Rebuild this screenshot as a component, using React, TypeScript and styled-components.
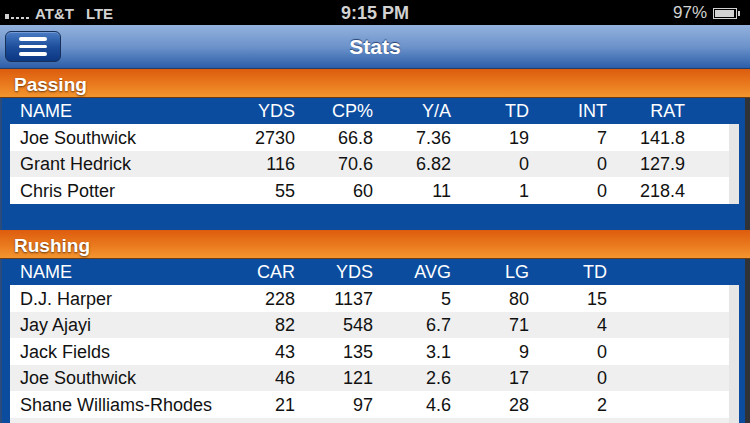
import React from "react";
import styled, { createGlobalStyle } from "styled-components";

const GlobalStyle = createGlobalStyle`
  html, body {
    margin: 0;
    padding: 0;
    background: #2f3237;
    font-family: "Liberation Sans", Arial, Helvetica, sans-serif;
  }
  * { box-sizing: border-box; }
`;

type Row = { name: string; values: (string | number)[] };

const passingCols = ["YDS", "CP%", "Y/A", "TD", "INT", "RAT"];
const passingRows: Row[] = [
  { name: "Joe Southwick", values: [2730, "66.8", "7.36", 19, 7, "141.8"] },
  { name: "Grant Hedrick", values: [116, "70.6", "6.82", 0, 0, "127.9"] },
  { name: "Chris Potter", values: [55, 60, 11, 1, 0, "218.4"] },
];

const rushingCols = ["CAR", "YDS", "AVG", "LG", "TD"];
const rushingRows: Row[] = [
  { name: "D.J. Harper", values: [228, 1137, 5, 80, 15] },
  { name: "Jay Ajayi", values: [82, 548, "6.7", 71, 4] },
  { name: "Jack Fields", values: [43, 135, "3.1", 9, 0] },
  { name: "Joe Southwick", values: [46, 121, "2.6", 17, 0] },
  { name: "Shane Williams-Rhodes", values: [21, 97, "4.6", 28, 2] },
  { name: "", values: ["", "", "", "", ""] },
];

const Screen = styled.div`
  width: 750px;
  height: 423px;
  overflow: hidden;
  display: flex;
  flex-direction: column;
`;

const StatusBar = styled.div`
  height: 25px;
  flex: 0 0 25px;
  background: #000;
  color: #d2d2d2;
  display: grid;
  grid-template-columns: 1fr auto 1fr;
  align-items: center;
  padding: 1px 5px 0;
  font-weight: bold;
`;

const Carrier = styled.div`
  display: flex;
  align-items: center;
  gap: 6px;
  font-size: 15px;
`;

const Signal = styled.div`
  display: flex;
  align-items: flex-end;
  gap: 2px;
  height: 12px;
  padding-top: 3px;
`;

const SignalDot = styled.span<{ $on?: boolean }>`
  width: ${(p) => (p.$on ? 4 : 3)}px;
  height: ${(p) => (p.$on ? 5 : 2)}px;
  background: #d2d2d2;
`;

const Clock = styled.div`
  font-size: 18px;
`;

const Battery = styled.div`
  display: flex;
  align-items: center;
  justify-content: flex-end;
  gap: 6px;
  font-size: 17px;
  font-weight: normal;
`;

const BatteryBody = styled.div`
  width: 24px;
  height: 11px;
  border: 1px solid #d2d2d2;
  padding: 1px;
  position: relative;
  &::before {
    content: "";
    display: block;
    width: 97%;
    height: 100%;
    background: #d2d2d2;
  }
  &::after {
    content: "";
    position: absolute;
    right: -4px;
    top: 2px;
    width: 2px;
    height: 5px;
    background: #d2d2d2;
  }
`;

const NavBar = styled.div`
  height: 44px;
  flex: 0 0 44px;
  border-bottom: 1px solid #233f68;
  background: linear-gradient(#93b2dd, #6d93cb 50%, #2c5ea8);
  display: grid;
  grid-template-columns: 70px 1fr 70px;
  align-items: center;
`;

const MenuButton = styled.button`
  margin-left: 5px;
  width: 56px;
  height: 31px;
  border-radius: 6px;
  border: 1px solid #16305a;
  background: linear-gradient(#4a7bc4, #1e4f9c 50%, #0b3682);
  box-shadow: inset 0 1px 0 rgba(255, 255, 255, 0.25);
  display: flex;
  flex-direction: column;
  align-items: center;
  justify-content: center;
  gap: 4px;
  padding: 0;
`;

const MenuLine = styled.span`
  width: 28px;
  height: 3.5px;
  border-radius: 2px;
  background: #fff;
`;

const Title = styled.div`
  text-align: center;
  color: #fff;
  font-size: 21px;
  font-weight: bold;
  padding-top: 1px;
  text-shadow: 0 -1px 1px rgba(20, 45, 90, 0.8);
`;

const SectionHeader = styled.div`
  height: 29px;
  flex: 0 0 29px;
  border-bottom: 1px solid #6b3a12;
  background: linear-gradient(#dc5c0e, #ea7a1e 55%, #f3962f);
  color: #fff;
  font-size: 19px;
  font-weight: bold;
  line-height: 31px;
  padding-left: 14px;
  text-shadow: 0 1px 2px rgba(60, 25, 0, 0.75);
`;

const Panel = styled.div<{ $bottom: number }>`
  background: #0b4c9f;
  margin-right: 5px;
  border-left: 2px solid #2a4c7c;
  padding: 0 6px ${(p) => p.$bottom}px 8px;
`;

const Grid = styled.div<{ $cols: number }>`
  display: grid;
  grid-template-columns: 197px repeat(${(p) => p.$cols}, 78px) 1fr;
  align-items: center;
  padding-left: 10px;
  font-size: 18px;
`;

const HeaderRow = styled(Grid)`
  height: 26px;
  color: #fff;
`;

const Table = styled.div`
  background: #fff;
  border-right: 10px solid #e6e6e6;
`;

const DataRow = styled(Grid)<{ $alt: boolean }>`
  height: 26.5px;
  padding-top: 2px;
  background: ${(p) => (p.$alt ? "#efefef" : "#fff")};
  color: #111;
`;

const Cell = styled.span<{ $num?: boolean }>`
  text-align: ${(p) => (p.$num ? "right" : "left")};
  white-space: nowrap;
`;

const StatSection = ({
  title,
  cols,
  rows,
  bottom,
}: {
  title: string;
  cols: string[];
  rows: Row[];
  bottom: number;
}) => (
  <>
    <SectionHeader>{title}</SectionHeader>
    <Panel $bottom={bottom}>
      <HeaderRow $cols={cols.length}>
        <Cell>NAME</Cell>
        {cols.map((c, i) => (
          <Cell key={i} $num>
            {c}
          </Cell>
        ))}
      </HeaderRow>
      <Table>
        {rows.map((r, i) => (
          <DataRow key={i} $cols={cols.length} $alt={i % 2 === 1}>
            <Cell>{r.name}</Cell>
            {r.values.map((v, j) => (
              <Cell key={j} $num>
                {v}
              </Cell>
            ))}
          </DataRow>
        ))}
      </Table>
    </Panel>
  </>
);

export default function App() {
  return (
    <>
      <GlobalStyle />
      <Screen>
        <StatusBar>
          <Carrier>
            <Signal>
              <SignalDot $on />
              <SignalDot />
              <SignalDot />
              <SignalDot />
              <SignalDot />
            </Signal>
            <span>AT&amp;T</span>
            <span style={{ marginLeft: 6 }}>LTE</span>
          </Carrier>
          <Clock>9:15 PM</Clock>
          <Battery>
            <span>97%</span>
            <BatteryBody />
            <span style={{ width: 2 }} />
          </Battery>
        </StatusBar>
        <NavBar>
          <MenuButton aria-label="Menu">
            <MenuLine />
            <MenuLine />
            <MenuLine />
          </MenuButton>
          <Title>Stats</Title>
          <span />
        </NavBar>
        <StatSection title="Passing" cols={passingCols} rows={passingRows} bottom={26.5} />
        <StatSection title="Rushing" cols={rushingCols} rows={rushingRows} bottom={0} />
      </Screen>
    </>
  );
}
